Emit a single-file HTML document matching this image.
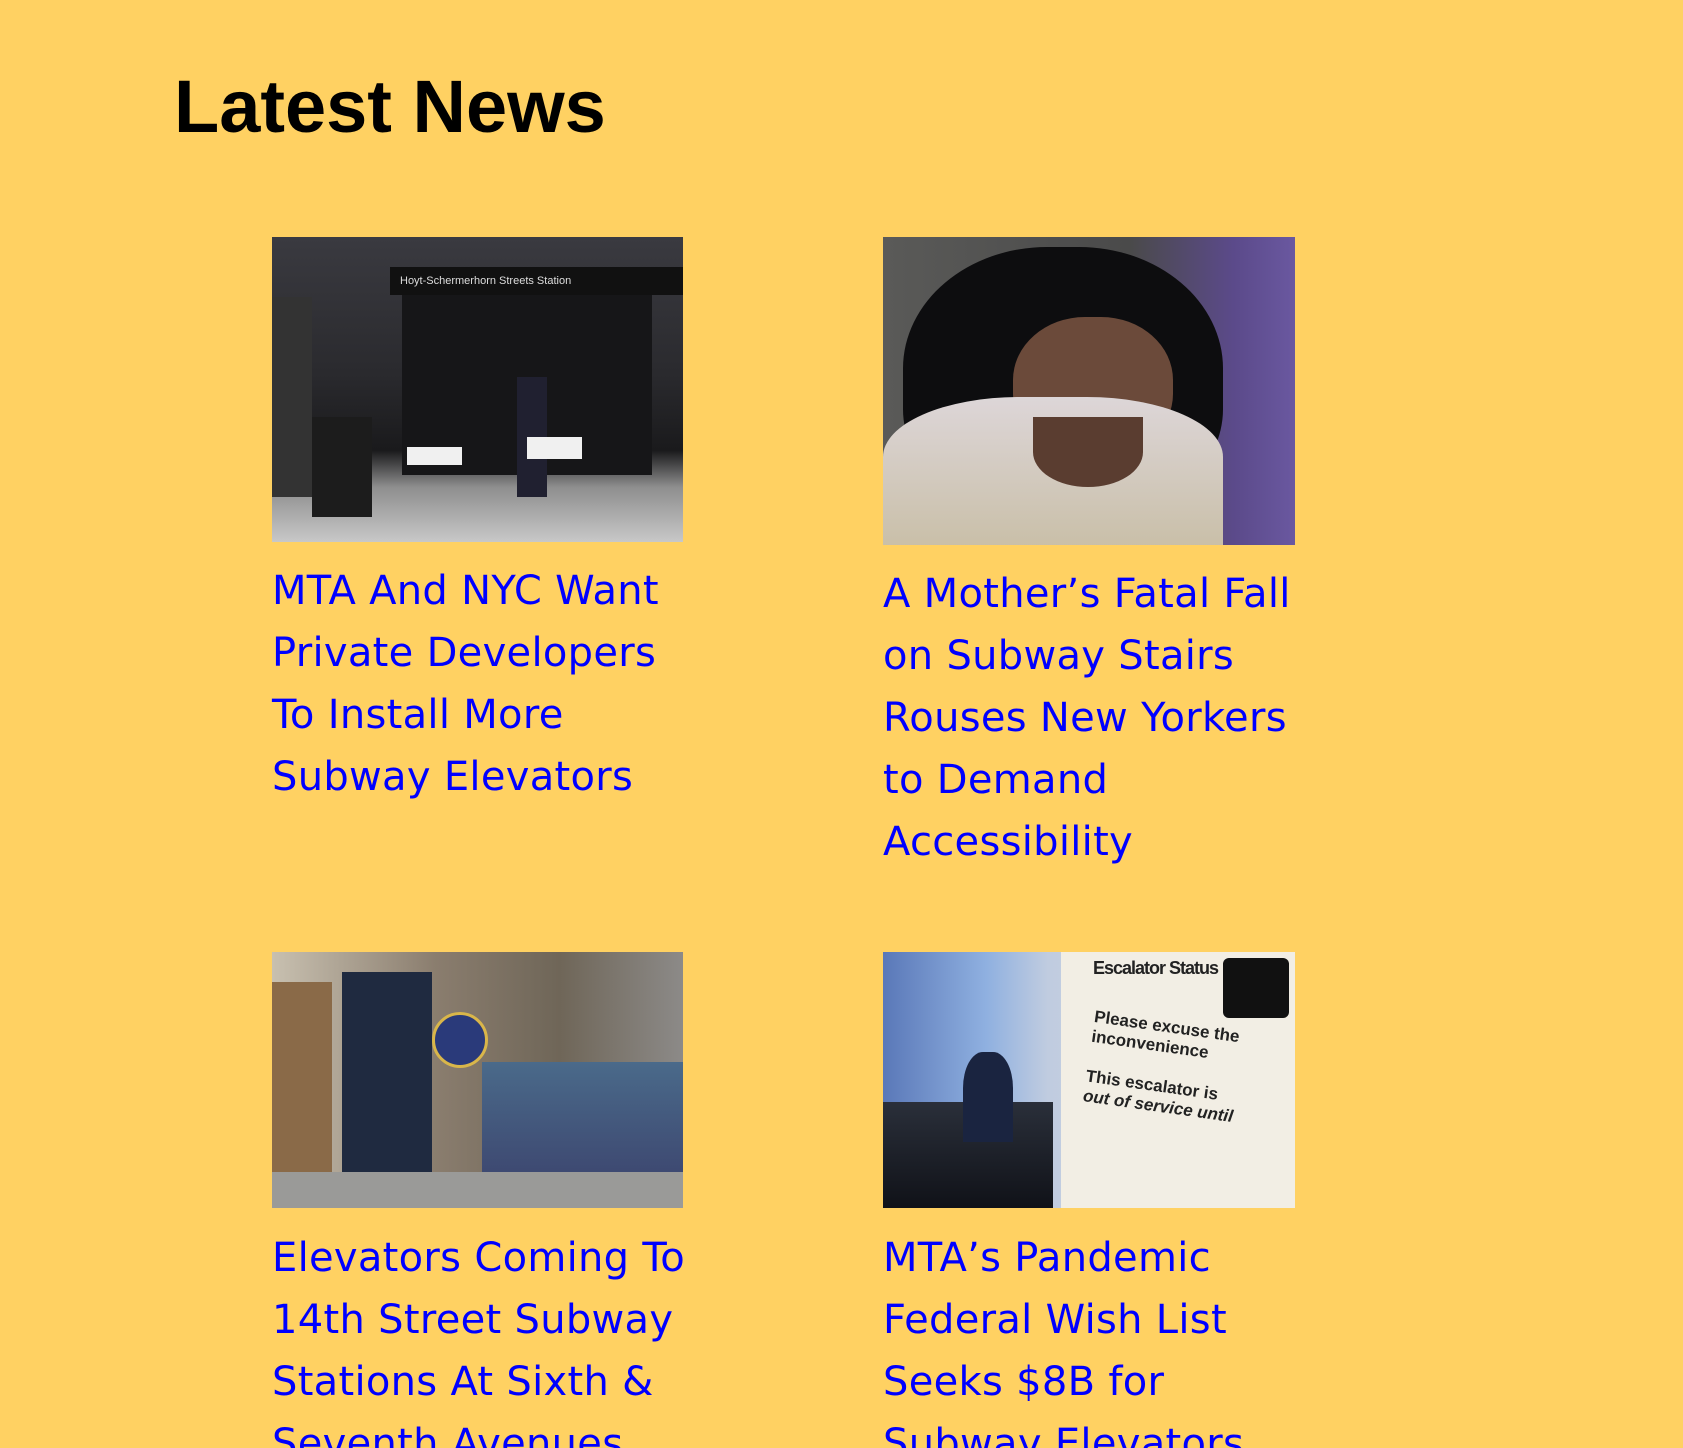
<!DOCTYPE html>
<html><head><meta charset="utf-8"><style>
html{margin:0;padding:0;width:1683px;height:1448px;overflow:hidden}
body{margin:0;padding:0;width:1683px;height:1448px;background:#FFD162;overflow:hidden;position:relative;font-family:"DejaVu Sans","Liberation Sans",sans-serif}
h1{position:absolute;left:174px;top:57px;margin:0;font:bold 74px/100px "Liberation Sans",sans-serif;color:#000}
.img{position:absolute;overflow:hidden}
.t{position:absolute;width:430px;font-size:40px;line-height:62px;color:#0000ff;margin:0;letter-spacing:0.3px}
</style></head><body>
<h1>Latest News</h1>

<div class="img" style="left:272px;top:237px;width:411px;height:305px;background:linear-gradient(180deg,#3a3a40 0%,#2a2a2e 45%,#1a1a1c 70%,#8e8e8e 82%,#c8c8c8 100%)">
  <div style="position:absolute;left:118px;top:30px;width:293px;height:28px;background:#111;color:#ddd;font:11px 'Liberation Sans',sans-serif;line-height:28px;padding-left:10px">Hoyt-Schermerhorn Streets Station</div>
  <div style="position:absolute;left:130px;top:58px;width:250px;height:180px;background:#161618"></div>
  <div style="position:absolute;left:0;top:60px;width:40px;height:200px;background:#333"></div>
  <div style="position:absolute;left:245px;top:140px;width:30px;height:120px;background:#202030"></div>
  <div style="position:absolute;left:40px;top:180px;width:60px;height:100px;background:#1c1c1c"></div>
  <div style="position:absolute;left:135px;top:210px;width:55px;height:18px;background:#f0f0f0"></div>
  <div style="position:absolute;left:255px;top:200px;width:55px;height:22px;background:#f0f0f0"></div>
</div>
<p class="t" style="left:272px;top:560px">MTA And NYC Want Private Developers To Install More Subway Elevators</p>

<div class="img" style="left:883px;top:237px;width:412px;height:308px;background:linear-gradient(90deg,#5a5a58 0%,#4a4a4a 60%,#5b4a8a 85%,#6a58a0 100%)">
  <div style="position:absolute;left:20px;top:10px;width:320px;height:270px;border-radius:45% 45% 40% 40%;background:#0d0d0f"></div>
  <div style="position:absolute;left:130px;top:80px;width:160px;height:140px;border-radius:45%;background:#6b4a3a"></div>
  <div style="position:absolute;left:0;top:160px;width:340px;height:150px;border-radius:40% 40% 0 0;background:linear-gradient(180deg,#ddd6d8,#c9bfa8)"></div>
  <div style="position:absolute;left:150px;top:180px;width:110px;height:70px;border-radius:0 0 50% 50%;background:#5a3d30"></div>
</div>
<p class="t" style="left:883px;top:563px">A Mother’s Fatal Fall on Subway Stairs Rouses New Yorkers to Demand Accessibility</p>

<div class="img" style="left:272px;top:952px;width:411px;height:256px;background:linear-gradient(90deg,#c8c0b0 0%,#8a7d6e 40%,#6f6658 70%,#8c8a88 100%)">
  <div style="position:absolute;left:0;top:30px;width:60px;height:226px;background:#8a6a48"></div>
  <div style="position:absolute;left:70px;top:20px;width:90px;height:236px;background:#1f2a40"></div>
  <div style="position:absolute;left:160px;top:60px;width:50px;height:50px;border-radius:50%;background:#2a3a7a;border:3px solid #d9b64a"></div>
  <div style="position:absolute;left:210px;top:110px;width:201px;height:146px;background:linear-gradient(180deg,#4a6a8a,#3a3f6a)"></div>
  <div style="position:absolute;left:0;top:220px;width:411px;height:36px;background:#9a9a98"></div>
</div>
<p class="t" style="left:272px;top:1227px">Elevators Coming To 14th Street Subway Stations At Sixth &amp; Seventh Avenues</p>

<div class="img" style="left:883px;top:952px;width:412px;height:256px;background:linear-gradient(90deg,#5a78b8 0%,#8fb0e0 25%,#c0cce0 40%,#dcdcd8 100%)">
  <div style="position:absolute;left:0;top:150px;width:170px;height:106px;background:linear-gradient(180deg,#2a2f3a,#101218)"></div>
  <div style="position:absolute;left:80px;top:100px;width:50px;height:90px;background:#1a2440;border-radius:40% 40% 0 0"></div>
  <div style="position:absolute;left:178px;top:0;width:234px;height:256px;background:#f2eee4"></div>
  <div style="position:absolute;left:340px;top:6px;width:66px;height:60px;background:#111;border-radius:6px"></div>
  <div style="position:absolute;left:210px;top:6px;font:bold 18px 'Liberation Sans',sans-serif;color:#222;letter-spacing:-1px">Escalator Status</div>
  <div style="position:absolute;left:205px;top:65px;font:bold 17px 'Liberation Sans',sans-serif;color:#222;transform:rotate(8deg);line-height:20px">Please excuse the<br>inconvenience<br><br>This escalator is<br><i>out of service until</i></div>
</div>
<p class="t" style="left:883px;top:1227px">MTA’s Pandemic Federal Wish List Seeks $8B for Subway Elevators</p>
</body></html>
